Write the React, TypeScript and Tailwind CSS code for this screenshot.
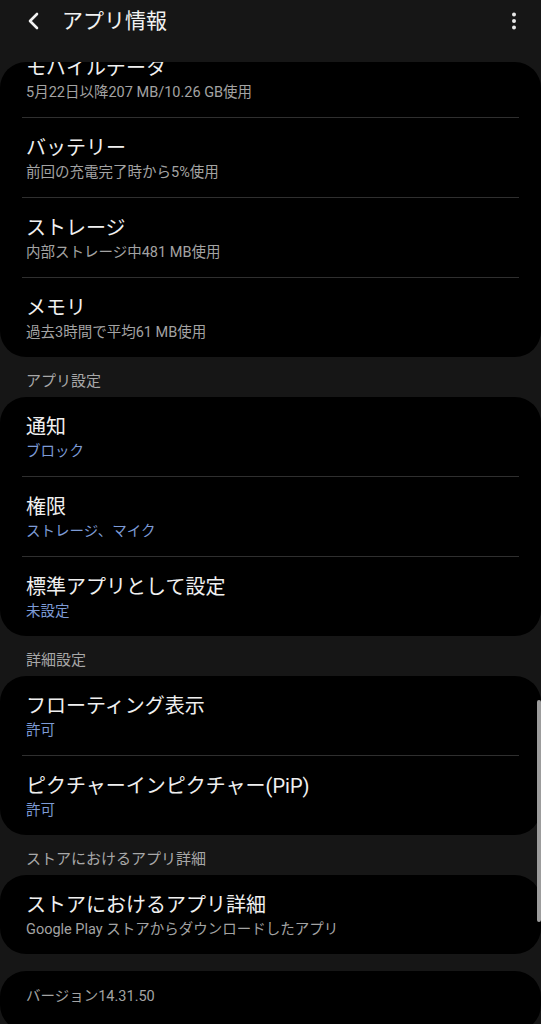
import React from "react";

type Row = { title: string; sub: string; blue?: boolean };

const font = { fontFamily: "Roboto, 'Noto Sans CJK JP', 'Noto Sans', sans-serif" };

function Card({ rows, className = "" }: { rows: Row[]; className?: string }) {
  return (
    <div className={`bg-black rounded-[26px] ${className}`}>
      {rows.map((r, i) => (
        <div key={i}>
          {i > 0 && <div className="mx-[22px] h-px bg-[#2f2f2f]" />}
          <div className="px-[26px] pt-[17px] pb-[14px]">
            <div className="text-[20px] leading-[26px] text-[#f0f0f0]">{r.title}</div>
            <div
              className={`mt-[2px] text-[14.5px] leading-[20px] ${
                r.blue ? "text-[#7d9bd6]" : "text-[#a3a3a3]"
              }`}
            >
              {r.sub}
            </div>
          </div>
        </div>
      ))}
    </div>
  );
}

function Section({ label }: { label: string }) {
  return (
    <div className="px-[26px] pt-[14px] pb-[6px] text-[15px] leading-[20px] text-[#a8a8a8]">
      {label}
    </div>
  );
}

export default function App() {
  return (
    <div className="relative h-[1024px] w-full overflow-hidden bg-[#161616]" style={font}>
      {/* Header */}
      <div className="flex h-[62px] items-center pl-[26px] pr-[24px] pb-[20px]">
        <div className="flex h-[42px] items-center">
          <svg width="16" height="20" viewBox="0 0 16 20">
            <path d="M11 3 L4 10 L11 17" fill="none" stroke="#f2f2f2" strokeWidth="2.6" strokeLinecap="round" strokeLinejoin="round" />
          </svg>
          <span className="ml-[20px] text-[21px] leading-[28px] text-[#f2f2f2]">アプリ情報</span>
        </div>
        <div className="ml-auto flex h-[42px] items-center">
          <svg width="6" height="20" viewBox="0 0 6 20">
            <circle cx="3" cy="3.5" r="2" fill="#e8e8e8" />
            <circle cx="3" cy="10" r="2" fill="#e8e8e8" />
            <circle cx="3" cy="16.5" r="2" fill="#e8e8e8" />
          </svg>
        </div>
      </div>

      {/* Scrolled list */}
      <div className="overflow-hidden rounded-t-[26px]">
        <Card
          className="-mt-[24px]"
          rows={[
            { title: "モバイルデータ", sub: "5月22日以降207 MB/10.26 GB使用" },
            { title: "バッテリー", sub: "前回の充電完了時から5%使用" },
            { title: "ストレージ", sub: "内部ストレージ中481 MB使用" },
            { title: "メモリ", sub: "過去3時間で平均61 MB使用" },
          ]}
        />
        <Section label="アプリ設定" />
        <Card
          rows={[
            { title: "通知", sub: "ブロック", blue: true },
            { title: "権限", sub: "ストレージ、マイク", blue: true },
            { title: "標準アプリとして設定", sub: "未設定", blue: true },
          ]}
        />
        <Section label="詳細設定" />
        <Card
          rows={[
            { title: "フローティング表示", sub: "許可", blue: true },
            { title: "ピクチャーインピクチャー(PiP)", sub: "許可", blue: true },
          ]}
        />
        <Section label="ストアにおけるアプリ詳細" />
        <Card
          rows={[
            {
              title: "ストアにおけるアプリ詳細",
              sub: "Google Play ストアからダウンロードしたアプリ",
            },
          ]}
        />
        <div className="mt-[17px] rounded-[26px] bg-black px-[26px] pt-[16px] pb-[24px] text-[14.5px] leading-[20px] text-[#a3a3a3]">
          バージョン14.31.50
        </div>
      </div>

      {/* Scrollbar */}
      <div className="absolute right-0 top-[700px] h-[222px] w-[4px] rounded-full bg-[#9c9c9c]" />
    </div>
  );
}
